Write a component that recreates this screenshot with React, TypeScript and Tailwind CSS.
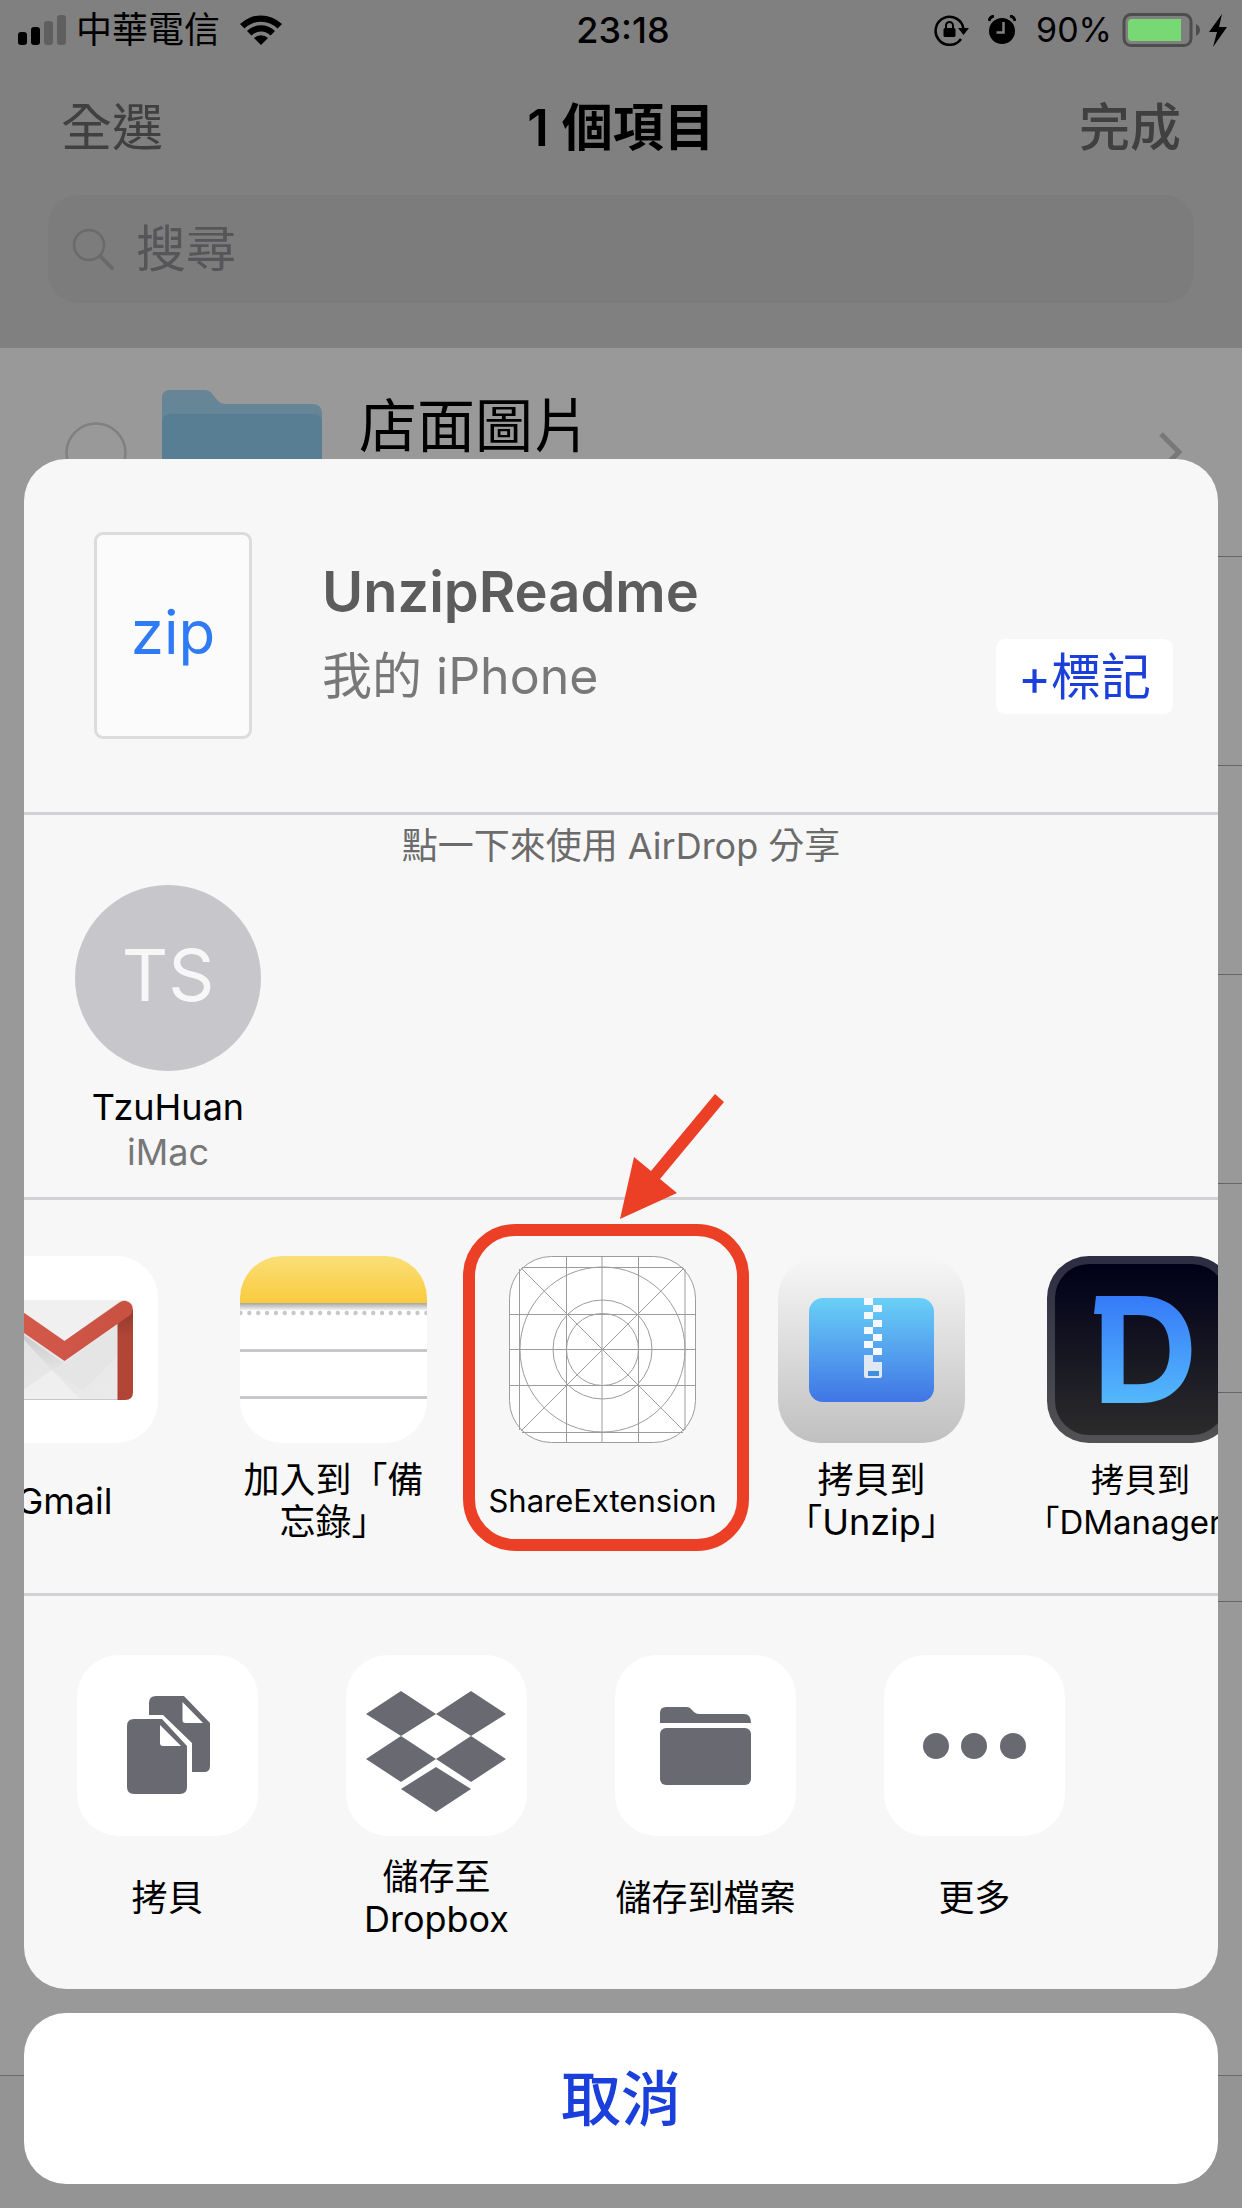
import type { ReactNode } from "react";

function StatusBar() {
  return (
    <div className="grid h-15 grid-cols-[1fr_auto_1fr] items-center pl-[18px] pr-[14px] text-[36px] leading-[44px] text-black">
      <div className="flex items-center">
        <svg width="48" height="30" viewBox="0 0 48 30" aria-label="Signal">
          <rect x="0" y="17" width="9" height="13" rx="3" />
          <rect x="13" y="12" width="9" height="18" rx="3" />
          <rect x="26" y="6" width="9" height="24" rx="3" fill="#5f5f5f" />
          <rect x="39" y="0" width="9" height="30" rx="3" fill="#5f5f5f" />
        </svg>
        <span className="ml-[10px]">中華電信</span>
        <svg className="ml-5" width="42" height="30" viewBox="0 0 42 30" aria-label="Wi-Fi">
          <path d="M0 9 A30 30 0 0 1 42 9 L37.500 13.500 A23.500 23.500 0 0 0 4.500 13.500 Z" />
          <path d="M7 16 A20 20 0 0 1 35 16 L30.500 20.500 A13.500 13.500 0 0 0 11.500 20.500 Z" />
          <path d="M14 23 A10 10 0 0 1 28 23 L21 30 Z" />
        </svg>
      </div>
      <span className="font-medium">23:18</span>
      <div className="flex items-center justify-end">
        <svg width="36" height="32" viewBox="0 0 36 32" aria-label="Rotation lock">
          <path d="M27 25 A14 14 0 1 1 29.500 15" fill="none" stroke="#000" strokeWidth="2.500" />
          <path d="M24 14 H35 L29.500 21 Z" />
          <rect x="9.500" y="14" width="12" height="9" rx="1.500" />
          <path d="M12 14 V11.500 A3.500 3.500 0 0 1 19 11.500 V14" fill="none" stroke="#000" strokeWidth="2" />
        </svg>
        <svg className="ml-[18px]" width="28" height="30" viewBox="0 0 28 30" aria-label="Alarm">
          <circle cx="14" cy="16" r="13" />
          <path d="M1 6 A6 6 0 0 1 6 1 M22 1 A6 6 0 0 1 27 6" fill="none" stroke="#000" strokeWidth="3" />
          <path d="M15.500 7 V17.500 H8.500" fill="none" stroke="#808080" strokeWidth="2.500" />
        </svg>
        <span className="ml-5 text-[34px]">90%</span>
        <svg className="ml-[10px]" width="106" height="36" viewBox="0 0 106 36" aria-label="Battery charging">
          <rect x="2" y="2.500" width="67" height="31" rx="7" fill="none" stroke="#4d4d4d" strokeWidth="3" />
          <path d="M10 7 H59 V29 H10 Q6 29 6 25 V11 Q6 7 10 7 Z" fill="#78d874" />
          <path d="M74 12 Q78 14 78 18 Q78 22 74 24 Z" fill="#4d4d4d" />
          <path d="M100 2 L87 20 H95 L91 35 L105 15 H97 Z" />
        </svg>
      </div>
    </div>
  );
}

function FilesHeader() {
  return (
    <header className="bg-[#808080] pb-[45px]">
      <StatusBar />
      <div className="grid h-[135px] grid-cols-[1fr_auto_1fr] items-center px-[61px] text-[51px] leading-[60px]">
        <button type="button" className="justify-self-start text-[#404040]">全選</button>
        <h1 className="font-semibold text-black">1 個項目</h1>
        <button type="button" className="justify-self-end font-medium text-[#404040]">完成</button>
      </div>
      <label className="mx-12 flex h-[108px] items-center rounded-[30px] bg-[#7c7c7c] pl-6">
        <svg width="42" height="42" viewBox="0 0 42 42" fill="none" stroke="#6a6a6a" strokeLinecap="round">
          <circle cx="17" cy="17" r="15" strokeWidth="2.500" />
          <path d="M28.500 28.500 L40 40" strokeWidth="4" />
        </svg>
        <input
          type="text"
          aria-label="搜尋"
          placeholder="搜尋"
          className="ml-[22px] min-w-0 flex-1 bg-transparent pr-6 text-[50px] leading-[60px] outline-none placeholder:text-[#565658]"
        />
      </label>
    </header>
  );
}

function FileRow({ children }: { children?: ReactNode }) {
  return (
    <li className="flex h-[209px] items-center">
      {children}
      {!children && <span className="ml-[360px] h-full flex-1 border-b border-[#656565]" />}
    </li>
  );
}

function FilesBackground() {
  return (
    <div className="flex min-h-screen flex-col bg-[#999999] [grid-area:1/1]">
      <FilesHeader />
      <ul className="flex-1">
        <FileRow>
          <svg className="ml-[65px] shrink-0" width="62" height="62" viewBox="0 0 62 62">
            <circle cx="31" cy="31" r="29.500" fill="none" stroke="#808080" strokeWidth="2.500" />
          </svg>
          <svg className="ml-[35px] shrink-0" width="160" height="126" viewBox="0 0 160 126">
            <path d="M0 8 Q0 0 8 0 H42 Q48 0 51 5 L56 11 Q59 14 64 14 H150 Q160 14 160 23 V60 H0 Z" fill="#668596" />
            <path d="M0 33 Q0 24 9 24 H151 Q160 24 160 33 V118 Q160 126 152 126 H8 Q0 126 0 118 Z" fill="#587e93" />
          </svg>
          <div className="ml-[37px] flex h-full flex-1 items-center border-b border-[#656565] pr-[60px]">
            <div className="flex-1">
              <p className="text-[58px] leading-[68px] text-black">店面圖片</p>
              <p className="text-[40px] leading-[52px] text-[#565658]">3 個項目</p>
            </div>
            <svg width="24" height="40" viewBox="0 0 24 40">
              <path d="M3 2 L21 20 L3 38" fill="none" stroke="#78787b" strokeWidth="5" />
            </svg>
          </div>
        </FileRow>
        <FileRow />
        <FileRow />
        <FileRow />
        <FileRow />
        <FileRow />
      </ul>
      <div className="h-[133px] border-t border-[#6b6b6b] bg-[#949494]" />
    </div>
  );
}

function GmailIcon() {
  return (
    <svg width="187" height="187" viewBox="0 0 187 187">
      <defs>
        <linearGradient id="gm-body" x1="0" y1="0" x2="1" y2="1">
          <stop offset="0" stopColor="#e2e2e2" />
          <stop offset="1" stopColor="#ebebeb" />
        </linearGradient>
        <linearGradient id="gm-shade" x1="0" y1="0" x2="0" y2="1">
          <stop offset="0" stopColor="#c4c4c4" />
          <stop offset="1" stopColor="#e3e3e3" />
        </linearGradient>
        <linearGradient id="gm-side" x1="0" y1="0" x2="0" y2="1">
          <stop offset="0" stopColor="#8f3a2d" />
          <stop offset="0.300" stopColor="#b14536" />
          <stop offset="1" stopColor="#b14435" />
        </linearGradient>
        <linearGradient id="gm-m" x1="0" y1="0" x2="1" y2="0">
          <stop offset="0" stopColor="#d55b4d" />
          <stop offset="1" stopColor="#c95142" />
        </linearGradient>
      </defs>
      <rect width="187" height="187" rx="42" fill="#fff" />
      <rect x="25" y="44" width="137" height="100" rx="8" fill="url(#gm-body)" />
      <path d="M40 70 L93 108 L146 70 V100 L112 135 L81 114 Z" fill="#e5e5e5" />
      <path d="M38 68 L92 107 L81 114 Z" fill="url(#gm-shade)" />
      <path d="M81 114 L110 144 H38 Z" fill="#efefef" />
      <path d="M33 44 H150 L93.500 85 Z" fill="#f0f0f0" />
      <path d="M41 143.500 H147" stroke="#c8c8c8" />
      <path d="M25 53 H41 V144 H33 Q25 144 25 136 Z" fill="url(#gm-side)" />
      <path d="M146.500 60 L162 53 V136 Q162 144 154 144 H146.500 Z" fill="url(#gm-side)" />
      <path d="M33 53 L93.500 95 L153.500 53" fill="none" stroke="url(#gm-m)" strokeWidth="16.500" strokeLinecap="round" />
    </svg>
  );
}

function NotesIcon() {
  return (
    <svg width="187" height="187" viewBox="0 0 187 187">
      <defs>
        <clipPath id="nt-clip"><rect width="187" height="187" rx="42" /></clipPath>
        <linearGradient id="nt-top" x1="0" y1="0" x2="0" y2="1">
          <stop offset="0" stopColor="#fadf78" />
          <stop offset="1" stopColor="#f9cb3e" />
        </linearGradient>
        <linearGradient id="nt-shadow" x1="0" y1="0" x2="0" y2="1">
          <stop offset="0" stopColor="#a5a5a5" />
          <stop offset="1" stopColor="#ffffff" />
        </linearGradient>
      </defs>
      <g clipPath="url(#nt-clip)">
        <rect width="187" height="187" fill="#fff" />
        <rect width="187" height="47" fill="url(#nt-top)" />
        <rect y="47" width="187" height="8" fill="url(#nt-shadow)" />
        <path d="M0.500 57 H188" stroke="#c8c7cc" strokeWidth="4.400" strokeLinecap="round" strokeDasharray="0 8.850" />
        <path d="M0 94.500 H187 M0 141.500 H187" stroke="#c8c7cc" strokeWidth="3" />
      </g>
    </svg>
  );
}

function TemplateIcon() {
  return (
    <svg width="187" height="187" viewBox="0 0 187 187" fill="none" stroke="#9c9c9c" strokeWidth="1">
      <rect x="0.500" y="0.500" width="186" height="186" rx="42" fill="#fff" />
      <path d="M10.500 13 V174 M57.500 0 V187 M93 0 V187 M129.500 0 V187 M176 13 V174" />
      <path d="M13 11.500 H174 M0 58.500 H187 M0 93.500 H187 M0 129.500 H187 M13 176.500 H174" />
      <path d="M12 12 L175 175 M175 12 L12 175" />
      <circle cx="93.500" cy="93.500" r="82.500" />
      <circle cx="93.500" cy="93.500" r="49.500" />
      <circle cx="93.500" cy="93.500" r="36" />
    </svg>
  );
}

function UnzipIcon() {
  return (
    <svg width="187" height="187" viewBox="0 0 187 187">
      <defs>
        <linearGradient id="uz-bg" x1="0" y1="0" x2="0" y2="1">
          <stop offset="0" stopColor="#f7f7f7" />
          <stop offset="1" stopColor="#c0c0c0" />
        </linearGradient>
        <linearGradient id="uz-box" x1="0" y1="0" x2="0" y2="1">
          <stop offset="0" stopColor="#69d0f7" />
          <stop offset="1" stopColor="#4075e5" />
        </linearGradient>
      </defs>
      <rect width="187" height="187" rx="42" fill="url(#uz-bg)" />
      <rect x="31" y="42" width="125" height="104" rx="14" fill="url(#uz-box)" />
      <g fill="#f5f8fc">
        <rect x="86" y="42" width="9" height="7" />
        <rect x="95" y="49" width="9" height="7" />
        <rect x="86" y="56" width="9" height="7" />
        <rect x="95" y="64" width="9" height="7" />
        <rect x="86" y="71" width="9" height="7" />
        <rect x="95" y="78" width="9" height="7" />
        <rect x="86" y="85" width="9" height="7" />
        <rect x="95" y="92" width="9" height="7" />
      </g>
      <path d="M86 99 H95 V106 H104 V120 Q104 122 102 122 H88 Q86 122 86 120 Z" fill="#e0e8f3" />
      <rect x="90" y="115" width="11" height="5" fill="#3f8fdc" />
    </svg>
  );
}

function DManagerIcon() {
  return (
    <svg width="187" height="187" viewBox="0 0 187 187">
      <defs>
        <linearGradient id="dm-rim" x1="0" y1="0" x2="0" y2="1">
          <stop offset="0" stopColor="#2c2c42" />
          <stop offset="1" stopColor="#525254" />
        </linearGradient>
        <linearGradient id="dm-bg" x1="0" y1="0" x2="0" y2="1">
          <stop offset="0" stopColor="#000019" />
          <stop offset="1" stopColor="#2b2b2b" />
        </linearGradient>
        <linearGradient id="dm-mark" gradientUnits="userSpaceOnUse" x1="0" y1="40" x2="0" y2="147">
          <stop offset="0" stopColor="#357af8" />
          <stop offset="1" stopColor="#54b8fb" />
        </linearGradient>
      </defs>
      <rect width="187" height="187" rx="42" fill="url(#dm-rim)" />
      <rect x="8" y="8" width="171" height="171" rx="34" fill="url(#dm-bg)" />
      <path d="M49 40 H62 V58 H47 Z" fill="url(#dm-mark)" />
      <text x="45" y="147" fontFamily="Inter, sans-serif" fontSize="147" fontWeight="700" fill="url(#dm-mark)">D</text>
    </svg>
  );
}

function CopyGlyph() {
  return (
    <svg width="181" height="181" viewBox="0 0 181 181" fill="#696971">
      <path d="M72 60 V48 Q72 41 79 41 H107 L133 68 V111 Q133 117 127 117 H115 V88 L86 60 Z" />
      <path d="M105.500 47 V65 Q105.500 68 108.500 68 H126 Z" fill="#fff" />
      <path d="M50 71 Q50 64 57 64 H85 L110 91 V132 Q110 139 103 139 H57 Q50 139 50 132 Z" />
      <path d="M83 70 V88 Q83 91 86 91 H104 Z" fill="#fff" />
    </svg>
  );
}

function DropboxGlyph() {
  return (
    <svg width="181" height="181" viewBox="0 0 181 181" fill="#696971">
      <path d="M55 36 L90 59 L55 81 L20 59 Z" />
      <path d="M125 36 L160 59 L125 81 L90 59 Z" />
      <path d="M55 81 L90 104 L55 127 L20 104 Z" />
      <path d="M125 81 L160 104 L125 127 L90 104 Z" />
      <path d="M90 112 L125 134 L90 157 L55 134 Z" />
    </svg>
  );
}

function FolderGlyph() {
  return (
    <svg width="181" height="181" viewBox="0 0 181 181" fill="#696971">
      <path d="M45 68 V58 Q45 52 51 52 H72 Q75 52 77 55 L79 57 Q81 59 84 59 H129 Q136 59 136 68 Z" />
      <rect x="45" y="73" width="91" height="57" rx="6" />
    </svg>
  );
}

function MoreGlyph() {
  return (
    <svg width="181" height="181" viewBox="0 0 181 181" fill="#696971">
      <circle cx="52" cy="91" r="13" />
      <circle cx="90" cy="91" r="13" />
      <circle cx="129" cy="91" r="13" />
    </svg>
  );
}

function Highlight() {
  return (
    <>
      <span className="pointer-events-none absolute -top-8 -right-[53px] -bottom-2 -left-[46px] rounded-[52px] border-12 border-[#ec4026]" />
      <svg className="pointer-events-none absolute -top-[162px] left-[111px]" width="104" height="125" viewBox="0 0 104 125">
        <path d="M0 125 L14 63 L31 77 L95 0 L104 8 L40 85 L57 99 Z" fill="#ec4026" />
      </svg>
    </>
  );
}

const apps: { lines: string[]; icon: ReactNode; size?: "small" | "medium"; highlighted?: boolean }[] = [
  { lines: ["Gmail"], icon: <GmailIcon /> },
  { lines: ["加入到「備", "忘錄」"], icon: <NotesIcon /> },
  { lines: ["ShareExtension"], icon: <TemplateIcon />, size: "small", highlighted: true },
  { lines: ["拷貝到", "「Unzip」"], icon: <UnzipIcon /> },
  { lines: ["拷貝到", "「DManager」"], icon: <DManagerIcon />, size: "medium" },
];

const actions: { lines: string[]; icon: ReactNode }[] = [
  { lines: ["拷貝"], icon: <CopyGlyph /> },
  { lines: ["儲存至", "Dropbox"], icon: <DropboxGlyph /> },
  { lines: ["儲存到檔案"], icon: <FolderGlyph /> },
  { lines: ["更多"], icon: <MoreGlyph /> },
];

const labelSizes = {
  small: "text-[31px]",
  medium: "text-[33px]",
  normal: "text-[36px]",
};

function TileLabel({ lines, size = "normal" }: { lines: string[]; size?: keyof typeof labelSizes }) {
  return (
    <span className={`flex h-21 flex-col items-center justify-center leading-[42px] whitespace-nowrap text-black ${labelSizes[size]}`}>
      {lines.map((line) => (
        <span key={line}>{line}</span>
      ))}
    </span>
  );
}

function ShareSheet() {
  return (
    <div className="flex min-h-screen flex-col justify-end gap-6 px-6 pb-6 [grid-area:1/1]">
      <section role="dialog" aria-label="分享" className="relative overflow-hidden rounded-[42px] bg-[#f7f7f7]">
        <div className="flex h-[356px] items-center border-b-3 border-[#d2d1d7] pr-[45px] pl-[70px]">
          <div className="flex h-[207px] w-[158px] items-center justify-center rounded-[9px] border-3 border-[#dcdcdc] bg-[#fbfbfb] pb-2 text-[60px] leading-[72px] text-[#2f7bf6]">
            zip
          </div>
          <div className="ml-[70px] flex-1 pb-1">
            <h2 className="text-[56px] leading-[72px] font-semibold text-[#5c5c5c]">UnzipReadme</h2>
            <p className="mt-3 text-[50px] leading-[72px] text-[#787878]">我的 iPhone</p>
          </div>
          <button type="button" className="mt-[82px] h-[75px] rounded-[9px] bg-white px-[22px] text-[50px] leading-[60px] text-[#1a3fdb]">
            +標記
          </button>
        </div>

        <div className="h-[385px] border-b-3 border-[#d2d1d7] px-[51px] pt-2">
          <p className="text-center text-[36px] leading-[46px] text-[#6b6b6b]">點一下來使用 AirDrop 分享</p>
          <button type="button" className="mt-4 flex w-[186px] flex-col items-center text-[36px] leading-[45px] text-black">
            <span className="mb-[14px] flex size-[186px] items-center justify-center rounded-full bg-[#c7c6cb] pb-2 text-[72px] text-[#f7f7f7]">TS</span>
            <span>TzuHuan</span>
            <span className="text-[#777777]">iMac</span>
          </button>
        </div>

        <div className="-ml-[53px] flex gap-[82px] pt-14 pb-[50px]">
          {apps.map((app) => (
            <button key={app.lines.join("")} type="button" className="relative flex w-[187px] shrink-0 flex-col items-center gap-4">
              {app.icon}
              <TileLabel lines={app.lines} size={app.size} />
              {app.highlighted && <Highlight />}
            </button>
          ))}
        </div>

        <div className="flex gap-[88px] border-t-3 border-[#d2d1d7] pt-[59px] pb-[49px] pl-[53px]">
          {actions.map((action) => (
            <button key={action.lines.join("")} type="button" className="flex w-[181px] shrink-0 flex-col items-center gap-5">
              <span className="rounded-[42px] bg-white">{action.icon}</span>
              <TileLabel lines={action.lines} />
            </button>
          ))}
        </div>
      </section>

      <button type="button" className="h-[171px] rounded-[42px] bg-white text-[60px] leading-[72px] font-medium text-[#1a3fdb]">
        取消
      </button>
    </div>
  );
}

export default function App() {
  return (
    <main lang="zh-Hant" className="grid min-h-screen grid-cols-1 overflow-hidden font-['Inter','Noto_Sans_CJK_TC',sans-serif]">
      <FilesBackground />
      <ShareSheet />
    </main>
  );
}
